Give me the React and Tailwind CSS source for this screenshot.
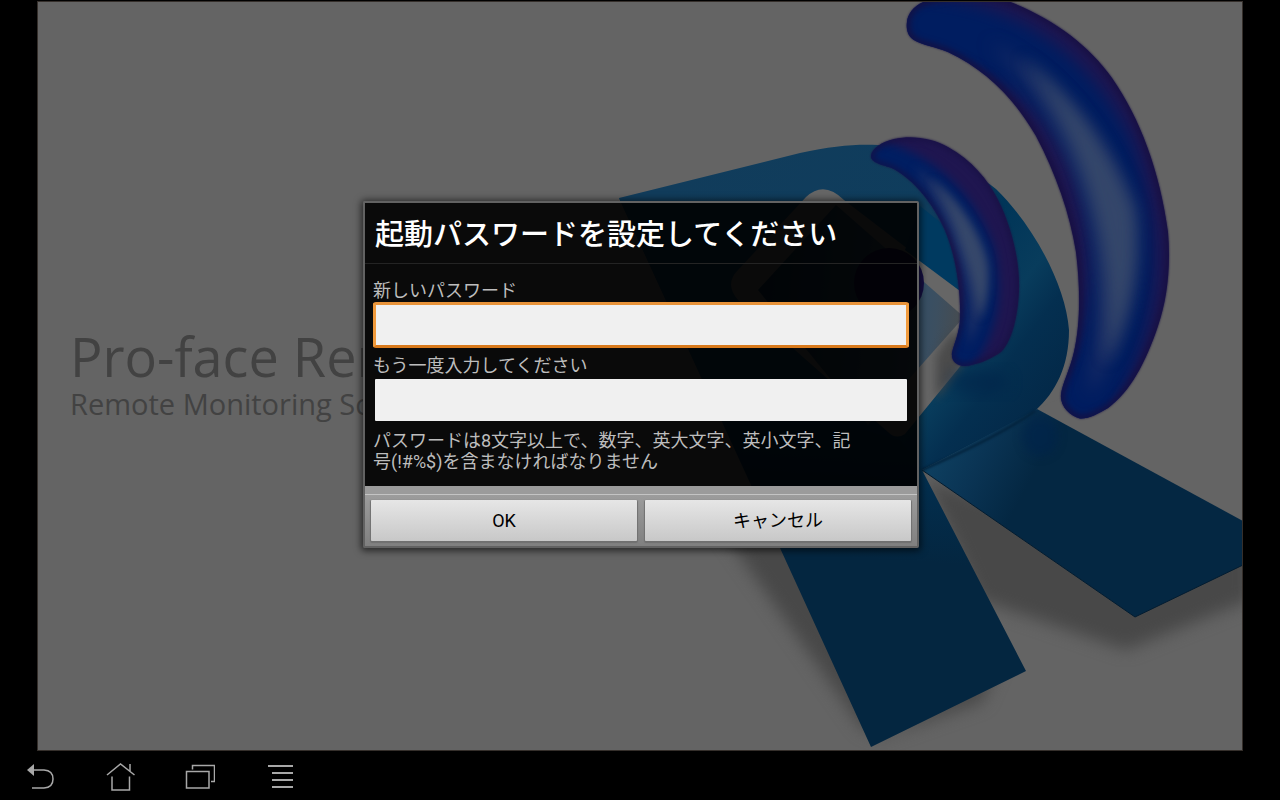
import React, { useState } from "react";

const BIG_WAVE =
  "M907 22 C908 12 916 3 932 -1 C958 -6 990 -6 1008 1 C1052 18 1088 44 1112 78 C1140 118 1160 172 1168 232 C1171 268 1167 300 1158 326 C1146 362 1130 392 1108 408 C1098 414 1088 419 1080 418.500 C1070 416 1060 406 1061 395 C1062 384 1070 370 1074 352 C1081 322 1080 284 1076 252 C1070 214 1056 174 1036 136 C1014 98 986 70 948 52 C936 47 922 45 914 40 C908 36 906 30 907 22 Z";
const SMALL_WAVE =
  "M871 156 C872 148 882 142 894 139 C912 135 932 138 948 147 C972 160 988 180 998 200 C1012 228 1020 262 1019 290 C1018 316 1012 340 1002 351 C992 359 976 365 965 366 C957 366 951 361 952 353 C954 344 959 334 960 320 C961 290 956 256 945 230 C933 203 914 180 894 169 C886 165 871 164 871 156 Z";

const Splash = () => (
  <svg
    viewBox="38 2 1204 748"
    preserveAspectRatio="xMaxYMid slice"
    className="col-start-1 row-start-1 h-full w-full"
    colorInterpolationFilters="sRGB"
    aria-hidden="true"
  >
    <defs>
      <linearGradient id="ribbon" x1="680" y1="170" x2="1040" y2="440" gradientUnits="userSpaceOnUse">
        <stop offset="0" stopColor="#113c5b" />
        <stop offset="0.5" stopColor="#0f3d5d" />
        <stop offset="0.62" stopColor="#003558" />
        <stop offset="0.76" stopColor="#083c5c" />
        <stop offset="0.84" stopColor="#042f50" />
        <stop offset="1" stopColor="#032746" />
      </linearGradient>
      <linearGradient id="fold" x1="925" y1="450" x2="1020" y2="500" gradientUnits="userSpaceOnUse">
        <stop offset="0" stopColor="#0f4263" />
        <stop offset="0.5" stopColor="#0a3454" />
        <stop offset="1" stopColor="#042742" />
      </linearGradient>
      <linearGradient id="glass" x1="760" y1="300" x2="960" y2="320" gradientUnits="userSpaceOnUse">
        <stop offset="0" stopColor="#0c2f47" />
        <stop offset="0.78" stopColor="#354f66" />
        <stop offset="0.88" stopColor="#3c4f60" />
        <stop offset="1" stopColor="#464c51" />
      </linearGradient>
      <linearGradient id="leg" x1="900" y1="420" x2="890" y2="560" gradientUnits="userSpaceOnUse">
        <stop offset="0" stopColor="#06395b" />
        <stop offset="0.5" stopColor="#032d4c" />
        <stop offset="1" stopColor="#042640" />
      </linearGradient>
      <filter id="blur8" x="-50%" y="-30%" width="200%" height="160%">
        <feGaussianBlur stdDeviation="8" />
      </filter>
      <filter id="blur5" x="-50%" y="-30%" width="200%" height="160%">
        <feGaussianBlur stdDeviation="5" />
      </filter>
      <filter id="blur3" x="-20%" y="-20%" width="140%" height="140%">
        <feGaussianBlur stdDeviation="3" />
      </filter>
      <filter id="blur1" x="-5%" y="-5%" width="110%" height="110%">
        <feGaussianBlur stdDeviation="1" />
      </filter>
      <clipPath id="bigClip"><path d={BIG_WAVE} /></clipPath>
      <clipPath id="smallClip"><path d={SMALL_WAVE} /></clipPath>
      <clipPath id="rightLeg"><path d="M922 470 L1037 409 L1243 521 V565 L1135 617 Z" /></clipPath>
    </defs>

    <rect x="38" y="2" width="1204" height="748" fill="#646464" />

    {/* shadows on the floor */}
    <g fill="#484848" filter="url(#blur8)">
      <path d="M700 500 L800 500 L888 738 L862 728 Z" />
      <path d="M880 738 L1000 660 L982 702 Z" />
      <path d="M925 478 L1100 540 L1250 540 V600 L1126 650 L980 600 Z" />
    </g>
    <path d="M1037 409 L1260 530 V380 H1100 Z" fill="#646464" />

    {/* letter R */}
    <path d="M619 198 L780 548 L871 747 L1026 671 L922 470 L918 380 L740 250 Z" fill="url(#leg)" />
    <path
      d="M619 198 L800 153 C832 146 855 144 878 145 C925 148 968 166 996 189 C1034 226 1066 286 1069 330 C1069 366 1056 392 1035 411 L922 470 L900 440 L760 400 L706 388 Z"
      fill="url(#ribbon)"
    />
    <path d="M922 470 L1037 409 L1243 521 V565 L1135 617 Z" fill="url(#fold)" />
    <g clipPath="url(#rightLeg)">
      <ellipse cx="1040" cy="436" rx="18" ry="20" fill="#00244a" opacity="0.7" filter="url(#blur5)" />
    </g>
    <path d="M922 470 L1135 617 L1243 565" fill="none" stroke="#031c30" strokeWidth="1" />
    <path d="M922 470 Q1000 436 1035 411" fill="none" stroke="#03213a" strokeWidth="2" filter="url(#blur1)" />

    {/* tablet in the bowl of the letter */}
    <path d="M806 197 Q824 180 844 200 L985 308 L967 358 L905 434 Q896 440 888 432 L738 300 Q724 284 738 270 Z" fill="#666" />
    <path d="M836 205 L964 317 L868 425 L758 290 Z" fill="url(#glass)" />
    <path d="M936 400 V356 L950 334 L962 334 V366 Z" fill="#444" opacity="0.8" filter="url(#blur5)" />
    <path d="M920 206 L960 238 V291 L905 250 Z" fill="#003a60" />
    <circle cx="889" cy="283" r="35" fill="#150f45" />
    <ellipse cx="978" cy="382" rx="30" ry="12" fill="#002349" opacity="0.6" filter="url(#blur8)" />

    {/* radio waves */}
    <path d={SMALL_WAVE} fill="#1c1448" filter="url(#blur1)" />
    <g clipPath="url(#smallClip)" fill="none" strokeLinecap="round">
      <path d={SMALL_WAVE} fill="#1f1650" />
      <path d="M884 160 Q950 182 977 252 Q990 310 962 352" stroke="#001e62" strokeWidth="35" filter="url(#blur5)" />
      <path d="M915 168 Q962 196 984 254 Q992 300 968 346 Q972 290 954 248 Q938 204 915 168 Z" fill="#1b2f66" filter="url(#blur5)" />
      <path d="M930 178 Q974 214 987 262 Q991 290 980 320 Q974 280 962 248 Q950 208 930 178 Z" fill="#3a4b6b" opacity="0.9" filter="url(#blur5)" />
      <path d={SMALL_WAVE} stroke="#160f40" strokeWidth="4" filter="url(#blur3)" />
    </g>
    <path d={BIG_WAVE} fill="#1c1448" filter="url(#blur1)" />
    <g clipPath="url(#bigClip)" fill="none" strokeLinecap="round">
      <path d={BIG_WAVE} fill="#1e1650" />
      <path d="M925 28 Q1046 40 1102 152 Q1150 286 1084 398" stroke="#001d60" strokeWidth="64" filter="url(#blur8)" />
      <path d="M990 42 Q1092 100 1134 205 Q1148 310 1088 396 Q1106 290 1086 210 Q1062 120 990 42 Z" fill="#182c65" filter="url(#blur8)" />
      <path d="M1020 56 Q1096 112 1134 210 Q1144 290 1106 364 Q1112 280 1096 218 Q1076 132 1020 56 Z" fill="#384a6b" opacity="0.9" filter="url(#blur8)" />
      <path d={BIG_WAVE} stroke="#160f40" strokeWidth="6" filter="url(#blur3)" />
    </g>
  </svg>
);

const PasswordField = ({ id, label, value, onChange, autoFocus }) => (
  <div className="flex flex-col">
    <label htmlFor={id} className="text-lg/[22px] text-[#bdbdbd]">{label}</label>
    <input
      id={id}
      type="password"
      value={value}
      onChange={onChange}
      autoFocus={autoFocus}
      className="h-[46px] w-full rounded-[3px] border-2 border-transparent bg-[#f0f0f0] bg-clip-padding px-2 text-lg text-black caret-transparent outline-none focus:border-3 focus:border-t-[#e8933a] focus:border-r-[#f09a3c] focus:border-b-[#d97a1c] focus:border-l-[#f09a3c]"
    />
  </div>
);

const DialogButton = ({ children, ...props }) => (
  <button
    className="h-[41px] flex-1 rounded-[1px] bg-linear-to-b from-[#e6e6e6] to-[#c8c8c8] text-lg text-black shadow-[0_1px_1px_1px_#707070]"
    {...props}
  >
    {children}
  </button>
);

const NavButton = ({ label, children }) => (
  <button aria-label={label} className="flex w-20 items-center justify-center">
    <svg width="30" height="30" viewBox="0 0 30 30" fill="none" stroke="#a8a8a8" strokeWidth="1.500">
      {children}
    </svg>
  </button>
);

const App = () => {
  const [password, setPassword] = useState("");
  const [confirm, setConfirm] = useState("");

  return (
    <div className="flex min-h-screen flex-col bg-black font-['Roboto','Noto_Sans_CJK_JP',sans-serif]">
      <main className="grid flex-1">
        {/* Splash screen behind the dialog */}
        <div className="col-start-1 row-start-1 grid px-[37px] pt-px">
          <div className="col-start-1 row-start-1 grid overflow-hidden border border-[#352f2b]">
            <Splash />
            <div className="col-start-1 row-start-1 w-[27%] self-center overflow-hidden pb-1 pl-8 font-['Open_Sans',sans-serif] text-[#424242]">
              <h1 className="text-[54px]/[60px] whitespace-nowrap">Pro-face Rem</h1>
              <p className="text-[29px]/[36px] whitespace-nowrap">Remote Monitoring So</p>
            </div>
          </div>
        </div>

        {/* Password dialog */}
        <div className="z-10 col-start-1 row-start-1 flex items-center justify-center pb-0.5 pl-0.5">
          <form
            role="dialog"
            aria-labelledby="dialog-title"
            onSubmit={(e) => e.preventDefault()}
            className="w-full max-w-[556px] rounded-[2px] border-2 border-[#626262] shadow-[0_1px_7px_2px_rgba(0,0,0,0.6)]"
          >
            <div className="bg-black/90">
              <h2 id="dialog-title" className="border-b border-[#242424] px-2.5 pt-1 text-[29px]/[56px] font-medium text-white">
                起動パスワードを設定してください
              </h2>
              <div className="flex flex-col gap-[7px] px-2 pt-4 pb-3.5">
                <PasswordField
                  id="password"
                  label="新しいパスワード"
                  value={password}
                  onChange={(e) => setPassword(e.target.value)}
                  autoFocus
                />
                <PasswordField
                  id="confirm"
                  label="もう一度入力してください"
                  value={confirm}
                  onChange={(e) => setConfirm(e.target.value)}
                />
                <p className="pr-12 text-lg/[21px] text-[#bdbdbd]">
                  パスワードは8文字以上で、数字、英大文字、英小文字、記号(!#%$)を含まなければなりません
                </p>
              </div>
            </div>
            <div className="bg-[#9b9b9b] pt-2">
              <div className="flex gap-2 border-t border-[#c4c4c4] bg-linear-to-b from-[#9c9c9c] to-[#808080] px-1.5 pt-[5px] pb-[5px]">
                <DialogButton type="submit">OK</DialogButton>
                <DialogButton type="button">キャンセル</DialogButton>
              </div>
            </div>
          </form>
        </div>
      </main>

      {/* System bar */}
      <nav className="flex h-[50px]">
        <NavButton label="Back">
          <path d="M2 9 L9 3 V15 Z" fill="#a8a8a8" stroke="none" />
          <path d="M8 9 H19 Q28 9.500 28 18 Q28 26.500 19 27 H7" />
        </NavButton>
        <NavButton label="Home">
          <path d="M2 14 L15.500 3 L29.500 14" />
          <path d="M25 3 V10" />
          <path d="M7 15.500 V29 H24.500 V15.500" />
        </NavButton>
        <NavButton label="Recent apps">
          <path d="M1.500 10.500 H24 V27 H1.500 Z" />
          <path d="M7.500 8.500 V4.500 H29.500 V20.500 H26" />
        </NavButton>
        <NavButton label="Menu">
          <path d="M3 5 H28 M7 12 H28 M7 19 H28 M7 26 H28" strokeWidth="2" />
        </NavButton>
      </nav>
    </div>
  );
};

export default App;
